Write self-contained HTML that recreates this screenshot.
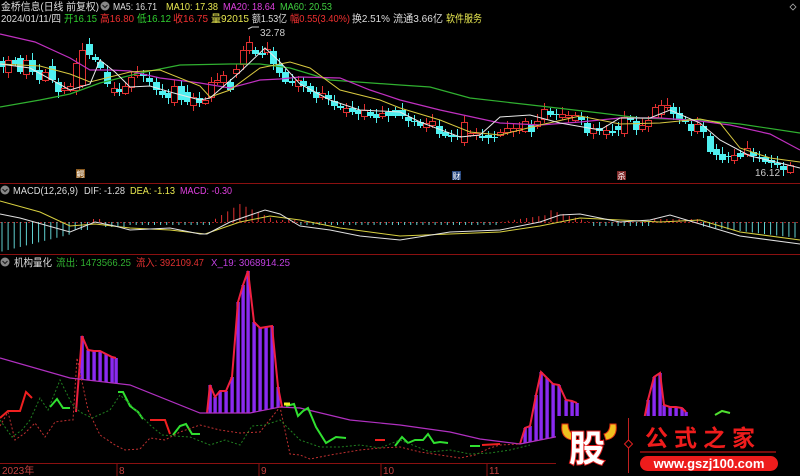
<!DOCTYPE html>
<html><head><meta charset="utf-8"><style>
html,body{margin:0;padding:0;background:#000;width:800px;height:476px;overflow:hidden}
svg{display:block}
text{font-family:"Liberation Sans","Noto Sans CJK SC",sans-serif}
</style></head><body>
<svg id="s" width="800" height="476" xmlns="http://www.w3.org/2000/svg">
<rect width="800" height="476" fill="#000"/>
<g font-size="10.5">
<text x="1" y="10" fill="#ddd" textLength="98" lengthAdjust="spacingAndGlyphs">金桥信息(日线 前复权)</text>
<circle cx="105" cy="6" r="4.5" fill="#888"/><path d="M102.5 5l2.5 2.5 2.5-2.5" stroke="#222" fill="none" stroke-width="1.2"/>
<text x="113" y="10" fill="#ddd" textLength="44" lengthAdjust="spacingAndGlyphs">MA5: 16.71</text>
<text x="166" y="10" fill="#e8e850" textLength="52" lengthAdjust="spacingAndGlyphs">MA10: 17.38</text>
<text x="223" y="10" fill="#e040e0" textLength="52" lengthAdjust="spacingAndGlyphs">MA20: 18.64</text>
<text x="280" y="10" fill="#40d040" textLength="52" lengthAdjust="spacingAndGlyphs">MA60: 20.53</text>
<text x="1" y="22" fill="#ddd" textLength="60" lengthAdjust="spacingAndGlyphs">2024/01/11/四</text>
<text x="64" y="22" fill="#30d030" textLength="33" lengthAdjust="spacingAndGlyphs">开16.15</text>
<text x="100" y="22" fill="#f03030" textLength="34" lengthAdjust="spacingAndGlyphs">高16.80</text>
<text x="137" y="22" fill="#30d030" textLength="34" lengthAdjust="spacingAndGlyphs">低16.12</text>
<text x="173" y="22" fill="#f03030" textLength="35" lengthAdjust="spacingAndGlyphs">收16.75</text>
<text x="211" y="22" fill="#e8e850" textLength="38" lengthAdjust="spacingAndGlyphs">量92015</text>
<text x="252" y="22" fill="#ddd" textLength="35" lengthAdjust="spacingAndGlyphs">额1.53亿</text>
<text x="290" y="22" fill="#f03030" textLength="60" lengthAdjust="spacingAndGlyphs">幅0.55(3.40%)</text>
<text x="352" y="22" fill="#ddd" textLength="38" lengthAdjust="spacingAndGlyphs">换2.51%</text>
<text x="393" y="22" fill="#ddd" textLength="50" lengthAdjust="spacingAndGlyphs">流通3.66亿</text>
<text x="446" y="22" fill="#e8e850" textLength="36" lengthAdjust="spacingAndGlyphs">软件服务</text>
<text x="260" y="36" fill="#ccc" font-size="10">32.78</text>
<path d="M248 29l4-2h7" stroke="#ccc" fill="none"/>
<text x="755" y="176" fill="#ccc" font-size="10">16.12</text>
<rect x="76" y="169" width="9" height="9" fill="#8a5a20"/><text x="76.5" y="177" font-size="8" fill="#fff">鳄</text>
<rect x="452" y="171" width="9" height="9" fill="#2a4a80"/><text x="452.5" y="179" font-size="8" fill="#fff">财</text>
<rect x="617" y="171" width="9" height="9" fill="#802a2a"/><text x="617.5" y="179" font-size="8" fill="#fff">杀</text>
<path d="M793 4l3 3-3 3-3-3z" stroke="#aaa" fill="none" stroke-width=".8"/>
</g>
<line x1="0" y1="183.5" x2="800" y2="183.5" stroke="#8a1010"/>
<line x1="0" y1="254.5" x2="800" y2="254.5" stroke="#8a1010"/>
<g font-size="10.5">
<circle cx="5" cy="190" r="4.5" fill="#888"/><path d="M2.5 189l2.5 2.5 2.5-2.5" stroke="#222" fill="none" stroke-width="1.2"/>
<text x="13" y="194" fill="#ddd" textLength="65" lengthAdjust="spacingAndGlyphs">MACD(12,26,9)</text>
<text x="84" y="194" fill="#ddd" textLength="41" lengthAdjust="spacingAndGlyphs">DIF: -1.28</text>
<text x="130" y="194" fill="#e8e850" textLength="45" lengthAdjust="spacingAndGlyphs">DEA: -1.13</text>
<text x="180" y="194" fill="#e040e0" textLength="52" lengthAdjust="spacingAndGlyphs">MACD: -0.30</text>
<circle cx="5" cy="262" r="4.5" fill="#888"/><path d="M2.5 261l2.5 2.5 2.5-2.5" stroke="#222" fill="none" stroke-width="1.2"/>
<text x="14" y="266" fill="#ddd" textLength="38" lengthAdjust="spacingAndGlyphs">机构量化</text>
<text x="56" y="266" fill="#30b030" textLength="75" lengthAdjust="spacingAndGlyphs">流出: 1473566.25</text>
<text x="136" y="266" fill="#e03030" textLength="68" lengthAdjust="spacingAndGlyphs">流入: 392109.47</text>
<text x="211" y="266" fill="#c040e0" textLength="79" lengthAdjust="spacingAndGlyphs">X_19: 3068914.25</text>
</g>
<line x1="0" y1="222.5" x2="800" y2="222.5" stroke="#a02020" stroke-dasharray="2,2"/>
<g id="g"></g>
<line x1="0" y1="463.5" x2="800" y2="463.5" stroke="#8a1010"/>
<g font-size="10" fill="#c04040">
<text x="2" y="474">2023年</text><line x1="117" y1="463" x2="117" y2="476" stroke="#8a1010"/><text x="119" y="474">8</text>
<line x1="259" y1="463" x2="259" y2="476" stroke="#8a1010"/><text x="261" y="474">9</text>
<line x1="381" y1="463" x2="381" y2="476" stroke="#8a1010"/><text x="383" y="474">10</text>
<line x1="487" y1="463" x2="487" y2="476" stroke="#8a1010"/><text x="489" y="474">11</text>
</g>
<rect x="556" y="416" width="244" height="60" fill="#000"/>
<path d="M562 424q-2 14 10 16l2-6q-6-2-6-10z" fill="#f0c020" stroke="#e03010"/>
<path d="M616 424q2 14-10 16l-2-6q6-2 6-10z" fill="#f0c020" stroke="#e03010"/>
<text x="569" y="461" font-size="36" font-weight="bold" fill="#fff" stroke="#e02020" stroke-width="2" paint-order="stroke" font-family="Noto Sans CJK SC,sans-serif">股</text>
<line x1="628.5" y1="418" x2="628.5" y2="473" stroke="#c02020"/>
<path d="M628.5 440l4 4-4 4-4-4z" fill="#000" stroke="#e02020"/>
<text x="645" y="446" font-size="23" font-weight="bold" fill="#ee1c1c" letter-spacing="6" font-family="Noto Serif CJK SC,serif">公式之家</text>
<line x1="640" y1="452" x2="776" y2="452" stroke="#a01010" stroke-width="1.5"/>
<rect x="640" y="456" width="138" height="15" rx="7.5" fill="#ee1c1c"/>
<text x="709" y="468" font-size="13" font-weight="bold" fill="#fff" text-anchor="middle">www.gszj100.com</text>
</svg>
<script>
var g=document.getElementById('g'),h='';
function pl(pts,c,w,d){h+='<polyline fill="none" stroke="'+c+'" stroke-width="'+(w||1)+'"'+(d?' stroke-dasharray="'+d+'"':'')+' points="'+pts.map(p=>p.join(',')).join(' ')+'"/>';}
var C=[[3,61,67,0],[8,60,72,1],[15,60,64,0],[20,58,72,0],[26,60,74,1],[32,60,72,0],[39,70,80,0],[45,72,80,1],[52,66,80,0],[58,82,92,0],[64,88,90,1],[70,86,90,1],[76,63,90,1],[82,50,85,1],[89,44,55,0],[95,57,60,0],[100,62,68,0],[107,72,84,0],[114,88,92,1],[119,89,92,0],[125,86,93,1],[131,77,87,1],[137,73,75,1],[143,74,76,0],[149,78,82,0],[156,82,90,0],[162,91,95,0],[168,93,98,0],[174,86,102,1],[181,86,100,0],[187,92,102,0],[193,97,105,1],[199,98,103,0],[205,100,103,1],[211,82,97,1],[217,80,82,1],[223,75,82,1],[230,82,90,0],[236,69,73,1],[243,50,64,1],[249,42,50,1],[255,50,54,0],[262,53,55,0],[267,49,52,1],[273,51,64,0],[279,64,73,0],[285,72,82,0],[292,81,83,0],[298,80,86,1],[303,81,86,0],[310,86,92,0],[316,92,98,0],[322,93,97,1],[328,95,99,0],[334,101,106,0],[340,106,108,0],[346,108,112,1],[352,108,112,0],[358,110,114,0],[364,110,116,1],[370,112,116,0],[376,114,118,0],[382,113,116,1],[388,112,116,0],[395,110,116,0],[402,110,116,0],[408,117,121,0],[414,121,122,0],[420,122,126,0],[426,123,127,1],[432,121,125,1],[439,126,134,0],[445,132,136,0],[451,135,137,0],[457,136,137,0],[464,122,142,1],[470,133,135,1],[476,133,135,1],[482,136,138,0],[488,135,138,0],[494,137,138,0],[500,132,135,1],[507,128,132,1],[513,128,131,1],[519,128,130,1],[525,121,131,1],[531,125,132,0],[537,121,126,1],[544,109,119,1],[550,111,115,0],[556,114,115,0],[562,114,117,1],[568,115,117,1],[575,115,120,1],[581,117,120,0],[587,123,133,0],[593,128,133,1],[599,128,131,0],[606,130,134,1],[612,131,133,0],[618,126,130,0],[624,117,133,1],[630,118,120,0],[636,121,130,0],[642,125,129,1],[648,120,126,1],[655,107,117,1],[661,105,114,1],[667,105,107,1],[673,107,114,0],[679,113,120,0],[685,119,122,0],[691,124,131,0],[697,124,131,1],[703,126,132,0],[710,136,152,0],[716,149,155,0],[722,154,160,0],[728,156,157,0],[734,155,160,1],[740,153,157,0],[747,148,154,1],[753,152,156,0],[759,157,158,0],[765,157,162,0],[771,160,163,0],[777,163,165,0],[783,166,170,0],[790,165,172,1]];
C.forEach(c=>{var col=c[3]?'#e03030':'#50f0f0';var hi=c[1]-3-(c[0]*7%5),lo=c[2]+2+(c[0]*3%5);
h+='<line x1="'+(c[0]+.5)+'" y1="'+hi+'" x2="'+(c[0]+.5)+'" y2="'+lo+'" stroke="'+col+'"/>';
var hh=Math.max(1,c[2]-c[1]);
if(c[3])h+='<rect x="'+(c[0]-2.5)+'" y="'+(c[1]+.5)+'" width="6" height="'+hh+'" fill="#000" stroke="'+col+'"/>';
else h+='<rect x="'+(c[0]-3)+'" y="'+c[1]+'" width="7" height="'+hh+'" fill="'+col+'"/>';});
pl([[0,107],[40,100],[70,94],[100,83],[140,73],[180,65],[230,64],[260,64],[290,68],[330,80],[400,85],[430,87],[470,98],[540,106],[600,113],[640,118],[700,120],[740,124],[800,133]],'#30b030',1.2);
pl([[0,34],[35,42],[70,58],[90,70],[110,70],[130,71],[160,78],[200,83],[230,88],[260,80],[280,79],[300,77],[340,78],[370,90],[400,100],[440,110],[500,123],[540,125],[580,122],[620,118],[660,118],[700,121],[730,125],[770,134],[800,150]],'#c030c0',1.2);
pl([[0,64],[40,66],[70,74],[90,82],[130,72],[160,70],[200,86],[210,97],[230,90],[260,68],[290,62],[310,68],[340,90],[380,100],[400,108],[440,120],[470,132],[500,135],[540,125],[580,116],[620,124],[660,123],[700,119],[720,123],[740,148],[770,158],[800,162]],'#d8c840',1);
pl([[0,64],[30,68],[70,90],[90,84],[100,60],[115,72],[130,87],[150,86],[170,92],[200,100],[210,98],[240,72],[265,48],[280,62],[300,84],[330,100],[360,110],[400,112],[420,122],[460,137],[480,135],[500,117],[530,115],[560,123],[600,130],[620,118],[650,118],[670,110],[700,123],[720,140],[750,156],[780,163],[800,168]],'#e8e8e8',1);
for(var x=2;x<800;x+=6.1){var v;
 if(x<75)v=-(30-x*0.25);else if(x<88)v=-8;else if(x<102)v=3;else if(x<130)v=-5;
 else if(x<210)v=-3;else if(x<280){v=x<240?(x-210)*0.6:18-(x-240)*0.45;}else if(x<300)v=2;
 else if(x<500)v=-3;else if(x<590){v=(x-500)*0.15;if(x>550)v=(590-x)*0.3;}else if(x<650)v=-4;else if(x<700)v=3;else v=-(x-690)*0.12-3;
 var col=v>0?'#e03030':'#60d0d0';h+='<line x1="'+x+'" y1="222" x2="'+x+'" y2="'+(222-v)+'" stroke="'+col+'"/>';}
pl([[0,201],[40,212],[70,226],[95,224],[130,228],[170,230],[205,234],[240,222],[270,216],[300,220],[340,228],[400,236],[450,234],[500,232],[540,226],[580,218],[620,220],[660,222],[700,220],[740,232],[800,240]],'#d8d040',1);
pl([[0,214],[20,218],[70,232],[95,222],[115,226],[130,230],[170,228],[200,234],[207,234],[230,222],[265,210],[280,214],[300,226],[330,230],[360,236],[400,240],[450,232],[500,230],[540,222],[560,215],[580,214],[620,222],[650,220],[670,215],[700,224],[740,236],[800,244]],'#e0e0e0',1);
var M=[[0,358],[70,378],[130,385],[200,413],[250,413],[280,407],[300,408],[350,420],[400,425],[450,432],[480,439],[520,444],[540,440],[560,436],[600,430],[640,420],[700,420],[800,420]];
function my(x){for(var i=0;i<M.length-1;i++)if(x<=M[i+1][0]){var t=(x-M[i][0])/(M[i+1][0]-M[i][0]);return M[i][1]+t*(M[i+1][1]-M[i][1]);}return 420;}
function hist(tops){for(var i=0;i<tops.length;i++){var x=tops[i][0];h+='<rect x="'+(x-1.6)+'" y="'+tops[i][1]+'" width="3.4" height="'+(my(x)-tops[i][1])+'" fill="#8a2af0"/>';}
 pl(tops,'#f02040',2);}
hist([[76,412],[82,336],[88,350],[94,351],[100,351],[106,354],[112,357],[116,358]]);
hist([[207,413],[210,385],[215,397],[220,391],[226,391],[232,377],[238,302],[243,285],[248,271],[254,322],[260,328],[266,327],[272,326],[278,387],[282,407]]);
hist([[520,444],[525,428],[530,426],[536,395],[541,372],[547,378],[553,384],[559,385],[566,400],[572,401],[577,403]]);
hist([[644,420],[648,400],[654,377],[660,373],[664,405],[670,407],[676,407],[682,408],[686,412]]);
pl(M,'#b030c0',1.2);
pl([[0,418],[8,411],[20,411],[26,392],[32,398]],'#f02020',2);
pl([[50,407],[57,399],[63,408],[70,408]],'#30e030',2);
pl([[150,420],[165,420],[170,434]],'#f02020',2);
pl([[118,392],[123,392],[130,406],[138,412],[143,419]],'#30e030',2);
pl([[173,435],[180,426],[186,424],[192,434],[200,434]],'#30e030',2);
pl([[286,406],[294,404],[298,416],[303,411],[308,408],[316,427],[326,443],[336,437],[346,438]],'#30e030',2);
pl([[284,404],[290,404]],'#f0f020',3);
pl([[375,440],[385,440]],'#f02020',2);
pl([[395,446],[402,437],[408,443],[415,440],[423,440],[428,434],[434,443],[440,442],[448,443]],'#30e030',2);
pl([[470,446],[480,446]],'#30e030',2);pl([[482,445],[500,444]],'#f02020',2);
pl([[715,415],[722,411],[730,413]],'#50e030',2);
pl([[0,426],[8,412],[15,440],[25,433],[35,423],[45,437],[55,422],[70,420],[73,420],[77,358],[88,410],[100,435],[115,445],[125,450],[140,449],[150,438],[165,440],[180,432],[200,425],[220,430],[240,433],[260,432],[280,407],[290,454],[300,455],[310,459],[330,455],[360,450],[380,448],[400,447],[420,452],[440,455],[460,458],[475,455],[490,448],[500,445],[520,444]],'#c03030',1,'2,2');
pl([[0,420],[12,437],[22,430],[30,420],[40,398],[48,410],[60,380],[72,404],[80,412],[92,418],[110,410],[120,395],[130,404],[150,425],[162,435],[175,436],[190,437],[210,445],[225,440],[240,445],[252,426],[265,425],[280,420],[290,430],[300,440],[320,447],[340,447],[360,445],[380,448],[400,440],[430,452],[450,450],[470,454],[490,453],[510,450],[530,445]],'#208020',1,'2,2');
g.innerHTML=h;
</script>
</body></html>
